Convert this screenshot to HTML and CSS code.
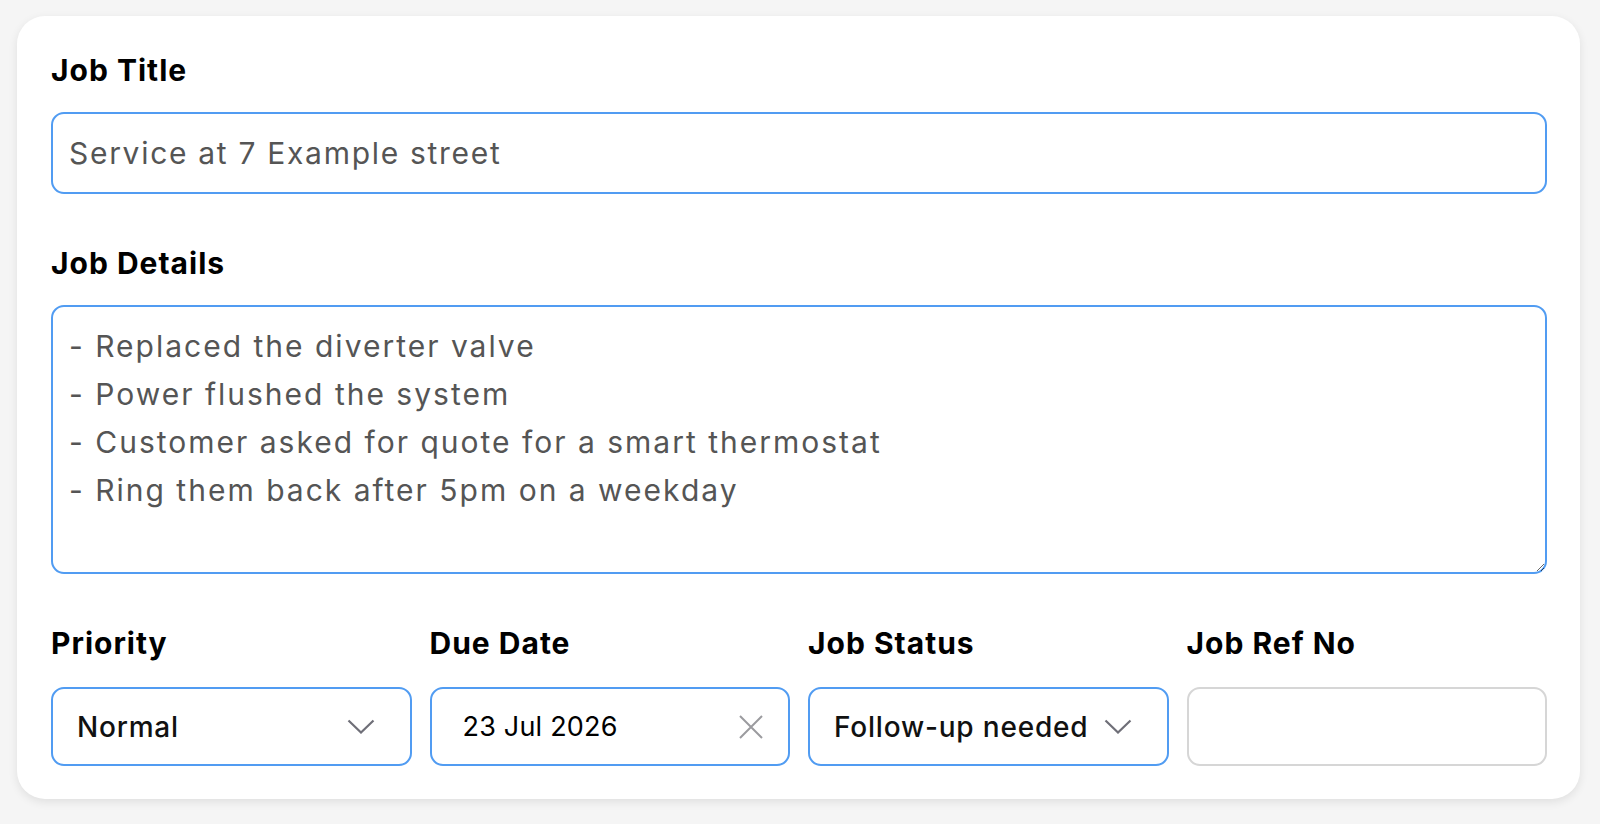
FILE: index.html
```html
<!DOCTYPE html>
<html lang="en">
<head>
    <title>Job</title>
    <meta name="viewport" content="width=device-width, initial-scale=1">
    <link rel="stylesheet" href="styles.css">
</head>
<body>
    <div class="page">
        <form class="card" name="jobForm" action="">
            <div class="field">
                <label class="label" for="jobTitle">Job Title</label>
                <input class="input" id="jobTitle" type="text" value="Service at 7 Example street">
            </div>
            <div class="field">
                <label class="label" for="jobDetails">Job Details</label>
                <textarea class="input details" id="jobDetails">- Replaced the diverter valve
- Power flushed the system
- Customer asked for quote for a smart thermostat
- Ring them back after 5pm on a weekday</textarea>
            </div>
            <div class="row">
                <div class="col">
                    <span class="label">Priority</span>
                    <div class="control select">
                        <span>Normal</span>
                        <svg class="chevron" width="28" height="15" viewBox="0 0 28 15"><path d="M1.5 1.5 L14 13.5 L26.5 1.5" fill="none" stroke="#6f6f78" stroke-width="2.2"/></svg>
                    </div>
                </div>
                <div class="col">
                    <span class="label">Due Date</span>
                    <div class="control date">
                        <span>23 Jul 2026</span>
                        <svg class="clear" width="24" height="24" viewBox="0 0 24 24"><path d="M1 1 L23 23 M23 1 L1 23" fill="none" stroke="#9b9b9f" stroke-width="2"/></svg>
                    </div>
                </div>
                <div class="col">
                    <span class="label">Job Status</span>
                    <div class="control select">
                        <span>Follow-up needed</span>
                        <svg class="chevron" width="28" height="15" viewBox="0 0 28 15"><path d="M1.5 1.5 L14 13.5 L26.5 1.5" fill="none" stroke="#6f6f78" stroke-width="2.2"/></svg>
                    </div>
                </div>
                <div class="col">
                    <label class="label" for="jobRef">Job Ref No</label>
                    <input class="control plain" id="jobRef" type="text" value="">
                </div>
            </div>
        </form>
    </div>
</body>
</html>
```

FILE: styles.css
```css
html, body {
    margin: 0;
    background: #f5f5f5;
    font-family: Inter, "Open Sans", sans-serif;
}
.page {
    padding: 16px 20px 24px 17px;
}
.card {
    background: #fff;
    border-radius: 28px;
    box-shadow: 0 3px 10px rgba(0, 0, 0, 0.09);
    padding: 32px 33px 33px 34px;
}
.field {
    display: flex;
    flex-direction: column;
    margin-bottom: 47px;
}
.label {
    display: block;
    font-size: 30px;
    font-weight: 700;
    letter-spacing: 1px;
    line-height: 44px;
    color: #000;
    margin-bottom: 20px;
}
.input {
    box-sizing: border-box;
    width: 100%;
    height: 82px;
    border: 2px solid #519cf2;
    border-radius: 13px;
    padding: 0 16px;
    font-family: inherit;
    font-size: 30px;
    letter-spacing: 1.7px;
    color: #555;
    background: #fff;
}
.input:focus, .control:focus {
    outline: 0;
}
.details {
    height: 269px;
    padding: 15px 16px;
    line-height: 48px;
    letter-spacing: 2px;
    resize: vertical;
    display: block;
}
.row {
    display: grid;
    grid-template-columns: repeat(4, 1fr);
    column-gap: 18px;
}
.row .label {
    margin-bottom: 22px;
}
.control {
    box-sizing: border-box;
    width: 100%;
    height: 79px;
    border: 2px solid #519cf2;
    border-radius: 13px;
    display: flex;
    align-items: center;
    justify-content: space-between;
    font-family: inherit;
    font-size: 28px;
    font-weight: 500;
    letter-spacing: 0.8px;
    color: #111;
    background: #fff;
}
.select {
    padding: 0 35px 0 24px;
}
.date {
    padding: 0 25px 0 31px;
    font-size: 27px;
    font-weight: 400;
    letter-spacing: 0.2px;
    color: #000;
}
.plain {
    border-color: #d6d6d6;
    padding: 0 24px;
}
.chevron, .clear {
    flex: none;
}
```
